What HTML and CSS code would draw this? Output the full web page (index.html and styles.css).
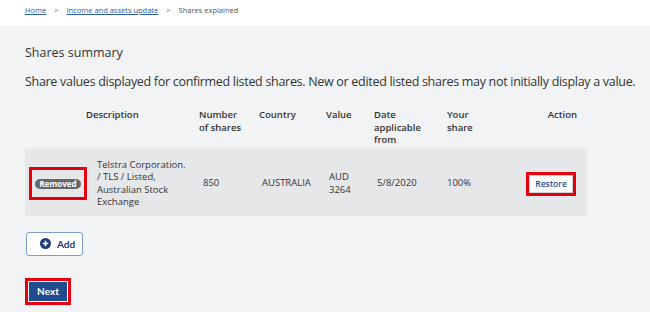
FILE: index.html
```html
<!DOCTYPE html>
<html lang="en">
<head>
    <meta charset="UTF-8">
    <meta name="viewport" content="width=device-width, initial-scale=1.0">
    <title>Shares explained</title>
    <link rel="stylesheet" href="styles.css">
</head>
<body>
    <nav class="breadcrumb">
        <a href="#">Home</a>
        <span class="sep">&gt;</span>
        <a href="#">Income and assets update</a>
        <span class="sep">&gt;</span>
        <span>Shares explained</span>
    </nav>

    <main class="content">
        <h2 class="section-title">Shares summary</h2>
        <p class="intro">Share values displayed for confirmed listed shares. New or edited listed shares may not initially display a value.</p>

        <div class="shares-table">
            <div class="table-head">
                <div></div>
                <div class="th">Description</div>
                <div class="th">Number<br>of shares</div>
                <div class="th">Country</div>
                <div class="th">Value</div>
                <div class="th">Date<br>applicable<br>from</div>
                <div class="th">Your<br>share</div>
                <div class="th th-action">Action</div>
            </div>
            <div class="table-row">
                <div class="td td-status">
                    <span class="highlight">
                        <span class="badge">Removed</span>
                    </span>
                </div>
                <div class="td td-desc">Telstra Corporation.<br>/ TLS / Listed,<br>Australian Stock<br>Exchange</div>
                <div class="td td-num">850</div>
                <div class="td td-country">AUSTRALIA</div>
                <div class="td td-value">AUD<br>3264</div>
                <div class="td td-date">5/8/2020</div>
                <div class="td td-share">100%</div>
                <div class="td td-action">
                    <span class="highlight">
                        <button class="btn-restore">Restore</button>
                    </span>
                </div>
            </div>
        </div>

        <button class="btn-add">
            <svg width="11" height="11" viewBox="0 0 16 16" aria-hidden="true">
                <circle cx="8" cy="8" r="8" fill="#1d3b78"/>
                <path d="M8 4v8M4 8h8" stroke="#fff" stroke-width="2.4"/>
            </svg>
            Add
        </button>

        <div class="actions">
            <span class="highlight">
                <button class="btn-next">Next</button>
            </span>
        </div>
    </main>
</body>
</html>
```

FILE: styles.css
```css
* {
    margin: 0;
    padding: 0;
    box-sizing: border-box;
}

body {
    font-family: "Open Sans", "Noto Sans", sans-serif;
    color: #333;
    background: #f2f3f5;
    height: 312px;
    overflow: hidden;
}

.breadcrumb {
    background: #fff;
    height: 26px;
    padding: 0 0 6px 25px;
    font-size: 7.5px;
    color: #555;
    display: flex;
    gap: 8px;
    align-items: center;
}

.breadcrumb a {
    color: #2a5ca8;
    text-decoration: underline;
}

.breadcrumb .sep {
    color: #666;
}

.content {
    padding: 18px 0 0 25px;
}

.section-title {
    font-size: 12.5px;
    font-weight: 400;
    color: #333;
    line-height: 18px;
}

.intro {
    font-size: 12.5px;
    line-height: 18px;
    margin-top: 11px;
    letter-spacing: -0.3px;
    white-space: nowrap;
}

.shares-table {
    width: 562px;
    margin-top: 18px;
    font-size: 9.5px;
    line-height: 12.5px;
}

.table-head,
.table-row {
    display: grid;
    grid-template-columns: 61px 110px 60px 67px 48px 73px 56px 87px;
}

.table-head {
    align-items: start;
    padding-bottom: 1px;
}

.th {
    font-weight: 600;
    padding-left: 3px;
}

.table-head .th:nth-child(2) {
    padding-left: 0;
}

.th-action {
    text-align: right;
    padding-right: 10px;
}

.table-row {
    background: #e6e7e9;
    border-top: 1px solid #eceef0;
    min-height: 68px;
    align-items: center;
    padding: 9px 0 6px;
}

.td {
    padding-left: 6px;
}

.td-status {
    padding-left: 4px;
}

.td-desc {
    padding-left: 11px;
}

.td-num {
    padding-left: 7px;
}

.td-share {
    padding-left: 3px;
}

.td-action {
    text-align: right;
    padding-right: 11px;
}

.highlight {
    display: inline-flex;
    align-items: center;
    justify-content: center;
    border: 3px solid #e3000f;
}

.td-status .highlight {
    width: 58px;
    height: 33px;
}

.badge {
    background: #666;
    color: #fff;
    font-weight: 700;
    font-size: 8px;
    line-height: 10px;
    padding: 0 4px;
    border-radius: 6px;
}

.btn-restore {
    font-family: "Open Sans", "Noto Sans", sans-serif;
    background: #fff;
    border: 1px solid #d0d3d8;
    color: #264c92;
    font-weight: 600;
    font-size: 8.5px;
    width: 44px;
    height: 18px;
}

.btn-add {
    font-family: Lato, sans-serif;
    display: flex;
    align-items: center;
    gap: 6px;
    margin: 16px 0 0 1px;
    width: 57px;
    height: 24px;
    padding-left: 13px;
    background: #fff;
    border: 1px solid #7d9bcb;
    border-radius: 3px;
    color: #1d3b78;
    font-weight: 700;
    font-size: 10px;
}

.actions {
    margin-top: 22px;
}

.actions .highlight {
    width: 46px;
    height: 27px;
}

.btn-next {
    font-family: Lato, sans-serif;
    background: #1f4b8f;
    color: #fff;
    border: 1px solid #fff;
    font-weight: 700;
    font-size: 10px;
    width: 40px;
    height: 21px;
}
```
